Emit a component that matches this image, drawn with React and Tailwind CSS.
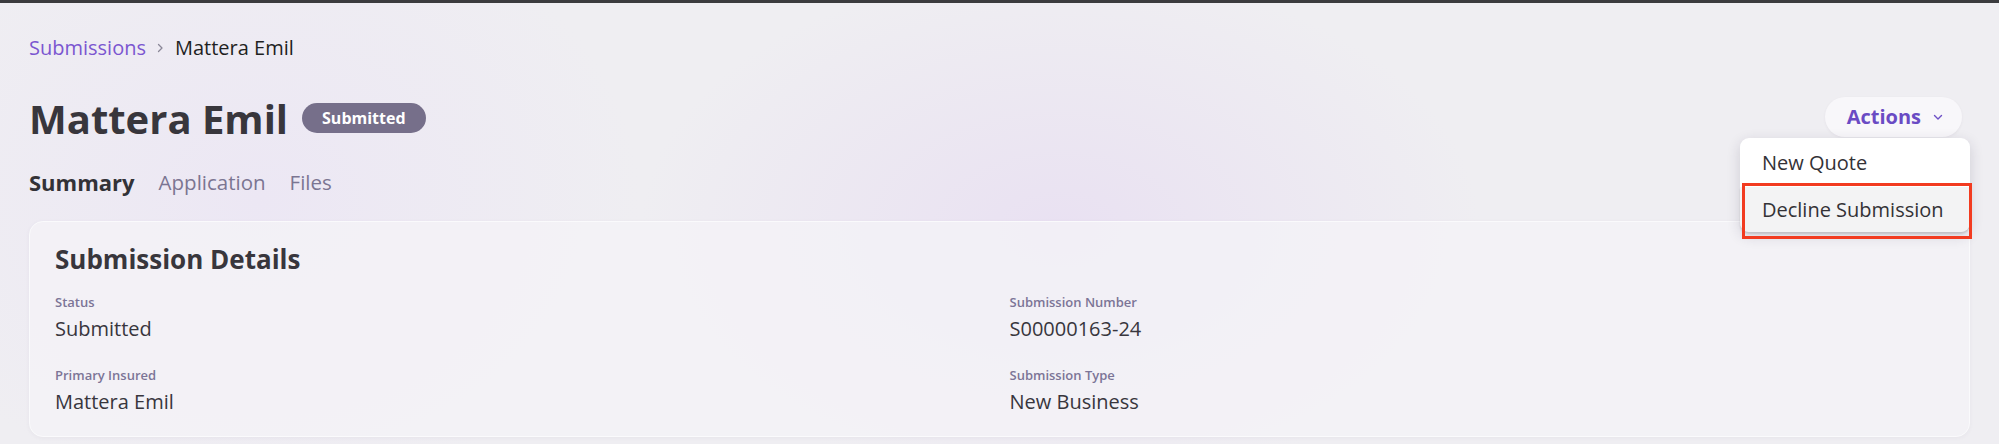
import React from "react";

const ChevronRight = () => (
  <svg width="7" height="10" viewBox="0 0 7 10" fill="none" className="mx-[11px]">
    <path d="M1.5 1.5L5 5L1.5 8.5" stroke="#8a8797" strokeWidth="1.3" strokeLinecap="round" strokeLinejoin="round" />
  </svg>
);

const ChevronDown = () => (
  <svg width="10" height="7" viewBox="0 0 10 7" fill="none">
    <path d="M1.5 1.5L5 5L8.5 1.5" stroke="#6d4fc6" strokeWidth="1.4" strokeLinecap="round" strokeLinejoin="round" />
  </svg>
);

const Field = ({ label, value }) => (
  <div>
    <div className="text-[13px] leading-[18px] font-semibold text-[#7c7597]">{label}</div>
    <div className="mt-[4px] text-[20px] leading-[28px] text-[#38363d]">{value}</div>
  </div>
);

export default function App() {
  return (
    <div
      className="h-[444px] w-full overflow-hidden bg-[#efeef2] bg-[radial-gradient(ellipse_420px_260px_at_1060px_230px,#e9e1f2_0%,rgba(239,238,242,0)_100%),radial-gradient(ellipse_380px_300px_at_260px_200px,#ece7f4_0%,rgba(239,238,242,0)_100%)]"
      style={{ fontFamily: '"Open Sans", "Noto Sans", sans-serif' }}
    >
      <div className="h-[3px] bg-[#3b3b3e]" />
      <div className="px-[29px] pt-[31px]">
        {/* breadcrumb */}
        <div className="flex items-center text-[20px] leading-[28px]">
          <span className="text-[#7b56d0]">Submissions</span>
          <ChevronRight />
          <span className="text-[#1f1f22]">Mattera Emil</span>
        </div>

        {/* title row */}
        <div className="mt-[33px] flex h-[48px] items-center justify-between">
          <div className="flex items-center">
            <h1 className="text-[40px] leading-[48px] font-bold text-[#38363c]">Mattera Emil</h1>
            <span className="ml-[14px] mt-[-2px] flex h-[30px] items-center rounded-full bg-[#766f8a] px-[20px] text-[16px] font-bold text-white">
              Submitted
            </span>
          </div>
          <div className="relative mr-[8px] mt-[-4px]">
            <button className="flex h-[40px] items-center gap-[12px] rounded-full bg-[#f8f7fa] pl-[22px] pr-[19px] shadow-[0_1px_3px_rgba(60,50,90,0.06)]">
              <span className="text-[20px] font-bold text-[#6a4bc4]">Actions</span>
              <ChevronDown />
            </button>
            <div className="absolute right-[-8px] top-[41px] z-10 w-[230px] rounded-[9px] bg-white shadow-[0_4px_14px_rgba(40,30,60,0.16)]">
              <div className="flex h-[49px] items-center px-[22px] text-[20px] text-[#333236]">New Quote</div>
              <div className="flex h-[45px] items-center rounded-b-[9px] bg-[#f3f3f4] px-[22px] text-[20px] text-[#333236] shadow-[0_2px_2px_rgba(0,0,0,0.12)]">
                Decline Submission
              </div>
              <div className="absolute left-[2px] top-[45px] h-[56px] w-[230px] border-[3px] border-[#f23b20]" />
            </div>
          </div>
        </div>

        {/* tabs */}
        <div className="mt-[25px] flex items-center gap-[24px] leading-[28px]">
          <span className="text-[22px] font-bold text-[#333237]">Summary</span>
          <span className="text-[20.5px] text-[#7b7592]">Application</span>
          <span className="text-[20.5px] text-[#7b7592]">Files</span>
        </div>

        {/* card */}
        <div className="mt-[25px] rounded-[14px] border border-[#fafafc] bg-[#f4f3f6]/80 px-[25px] pt-[21px] pb-[20px] shadow-[0_1px_4px_rgba(70,60,100,0.05)]">
          <h2 className="text-[26px] leading-[32px] font-bold text-[#38363c]">Submission Details</h2>
          <div className="mt-[18px] grid grid-cols-2 gap-x-[20px] gap-y-[23px]">
            <Field label="Status" value="Submitted" />
            <Field label="Submission Number" value="S00000163-24" />
            <Field label="Primary Insured" value="Mattera Emil" />
            <Field label="Submission Type" value="New Business" />
          </div>
        </div>
      </div>
    </div>
  );
}
